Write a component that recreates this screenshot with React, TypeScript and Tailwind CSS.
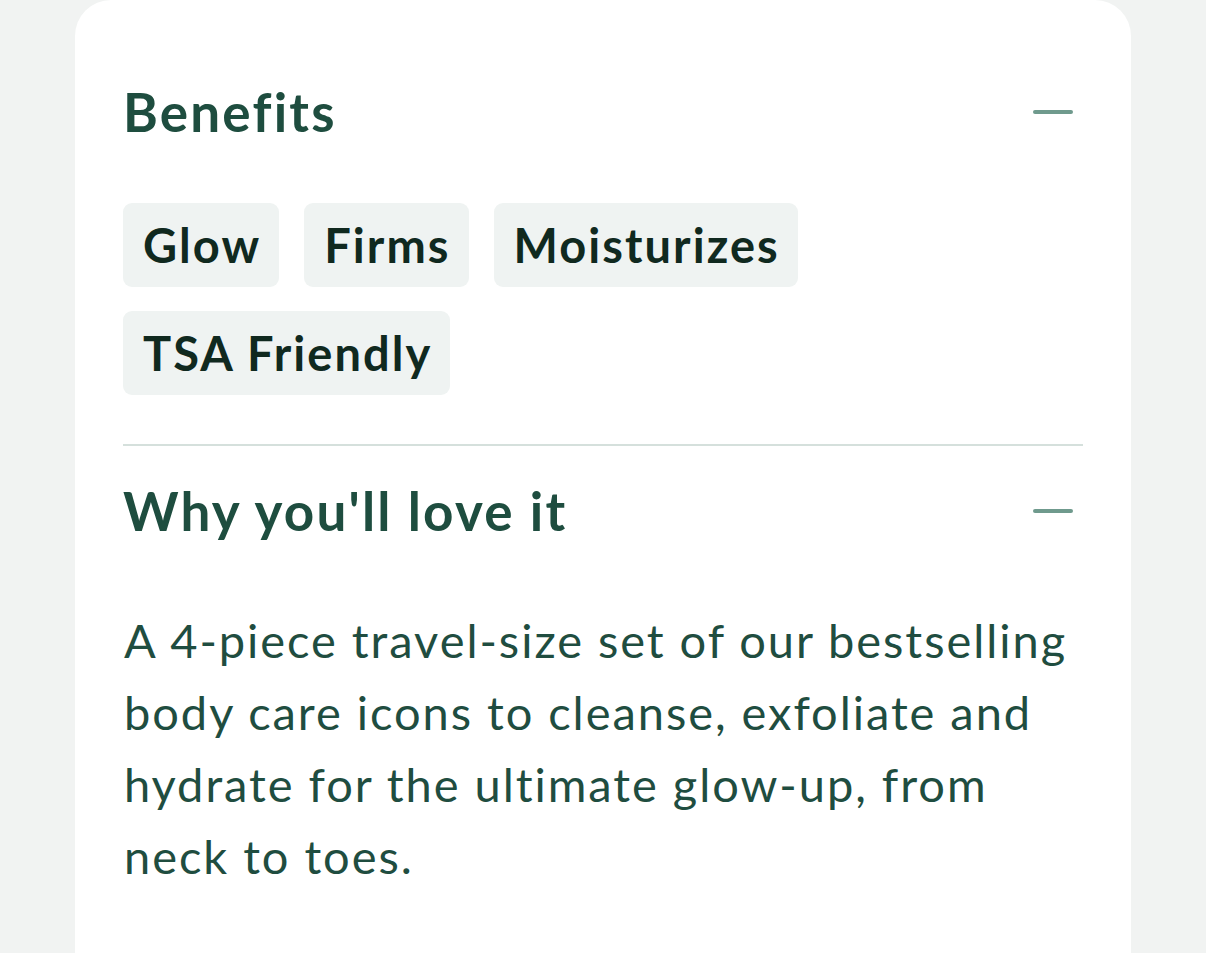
const benefits = ["Glow", "Firms", "Moisturizes", "TSA Friendly"];

const MinusIcon = () => (
  <span className="block h-[4px] w-[40px] rounded-full bg-[#6f9a8d]" />
);

const SectionHeader = ({ title }: { title: string }) => (
  <div className="flex items-center justify-between pr-[10px]">
    <h2 className="text-[53px] leading-[64px] font-bold tracking-[2.2px] text-[#1e4d3f]">
      {title}
    </h2>
    <MinusIcon />
  </div>
);

export default function App() {
  return (
    <div
      className="min-h-screen bg-[#f1f3f2] px-[75px] [font-variant-ligatures:none]"
      style={{ fontFamily: "Lato, 'Noto Sans', sans-serif" }}
    >
      <div className="min-h-[953px] w-[1056px] rounded-t-[36px] bg-white pt-[80px] pr-[48px] pl-[48px]">
        <SectionHeader title="Benefits" />
        <div className="mt-[59px] flex flex-wrap gap-x-[25px] gap-y-[24px]">
          {benefits.map((b) => (
            <span
              key={b}
              className="flex h-[84px] items-center rounded-[9px] bg-[#eff3f2] pr-[18px] pl-[20px] text-[47px] font-bold tracking-[2.05px] text-[#10291f]"
            >
              {b}
            </span>
          ))}
        </div>
        <div className="mt-[49px] h-[2px] bg-[#d5e0dc]" />
        <div className="mt-[33px]">
          <SectionHeader title="Why you'll love it" />
        </div>
        <p className="mt-[61px] pl-px text-[47px] leading-[72px] tracking-[1.95px] text-[#1f4d40]">
          A 4-piece travel-size set of our bestselling body care icons to cleanse, exfoliate and
          hydrate for the ultimate glow-up, from neck to toes.
        </p>
      </div>
    </div>
  );
}
